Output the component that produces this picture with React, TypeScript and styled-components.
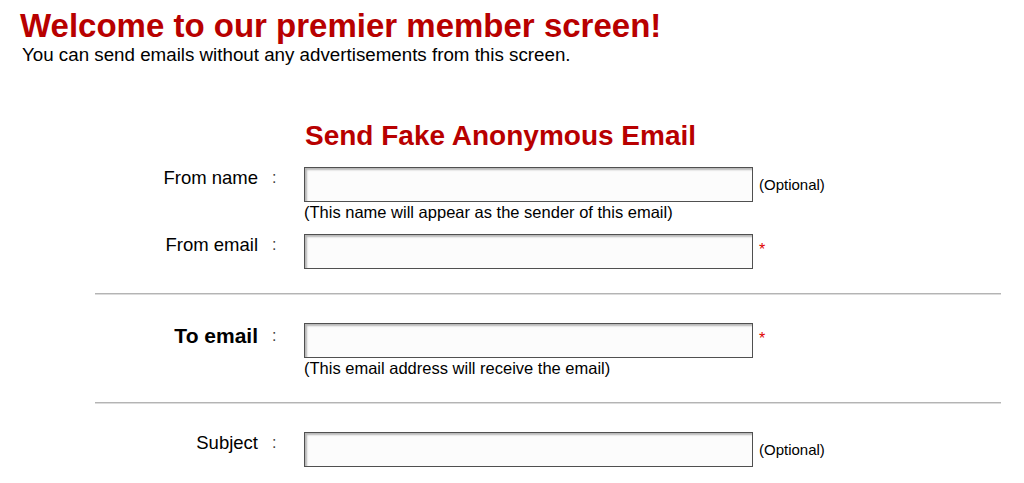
import React from 'react';
import styled, { createGlobalStyle } from 'styled-components';

const GlobalStyle = createGlobalStyle`
  body {
    margin: 0;
    background: #ffffff;
    font-family: "Liberation Sans", Arial, sans-serif;
    color: #000;
  }
`;

function FormRow({ label, strong, note, help, required }) {
  return (
    <Row>
      <Label strong={strong}>{label}</Label>
      <Colon strong={strong}>:</Colon>
      <FieldCell>
        <FieldLine>
          <TextBox type="text" />
          {note && <Note>{note}</Note>}
          {required && <Required>*</Required>}
        </FieldLine>
        {help && <Help>{help}</Help>}
      </FieldCell>
    </Row>
  );
}

export default function App() {
  return (
    <Page>
      <GlobalStyle />
      <Header>
        <Title>Welcome to our premier member screen!</Title>
        <Intro>You can send emails without any advertisements from this screen.</Intro>
      </Header>

      <FormBox>
        <FormTitleRow>
          <FormTitle>Send Fake Anonymous Email</FormTitle>
        </FormTitleRow>

        <FormRow label="From name" note="(Optional)" help="(This name will appear as the sender of this email)" />
        <Gap size={12} />
        <FormRow label="From email" required />

        <Divider top={24} bottom={28} />

        <FormRow label="To email" strong required help="(This email address will receive the email)" />

        <Divider top={24} bottom={28} />

        <FormRow label="Subject" note="(Optional)" />
      </FormBox>
    </Page>
  );
}

const Page = styled.div`
  padding: 8px 0 0 0;
`;

const Header = styled.div`
  padding-left: 20px;
`;

const Title = styled.h1`
  margin: 0;
  font-size: 33px;
  line-height: 36px;
  font-weight: bold;
  color: #b80000;
`;

const Intro = styled.p`
  margin: 0 0 0 2px;
  font-size: 18.75px;
  line-height: 22px;
`;

const FormBox = styled.div`
  margin: 54px 0 0 95px;
  width: 906px;
`;

const FormTitleRow = styled.div`
  padding-left: 210px;
  margin-bottom: 15px;
`;

const FormTitle = styled.h2`
  margin: 0;
  font-size: 28px;
  line-height: 32px;
  font-weight: bold;
  color: #b80000;
`;

const Row = styled.div`
  display: grid;
  grid-template-columns: 163px 46px 1fr;
  align-items: start;
`;

const Label = styled.div`
  text-align: right;
  font-size: ${(props) => (props.strong ? '21px' : '18.5px')};
  font-weight: ${(props) => (props.strong ? 'bold' : 'normal')};
  line-height: ${(props) => (props.strong ? '26px' : '21px')};
`;

const Colon = styled.div`
  font-size: 16px;
  line-height: ${(props) => (props.strong ? '26px' : '21px')};
  color: #444;
  padding-left: 14px;
`;

const FieldCell = styled.div`
  display: flex;
  flex-direction: column;
`;

const FieldLine = styled.div`
  display: flex;
  align-items: center;
`;

const TextBox = styled.input`
  box-sizing: border-box;
  width: 449px;
  height: 35px;
  margin: 0;
  border: 1px solid #505050;
  background: #fcfcfc;
  box-shadow: inset 2px 2px 2px rgba(0, 0, 0, 0.28);
  outline: none;
`;

const Note = styled.span`
  margin-left: 6px;
  font-size: 15px;
`;

const Required = styled.span`
  margin-left: 6px;
  margin-bottom: 4px;
  font-size: 16px;
  color: #e00000;
`;

const Help = styled.div`
  font-size: 16.5px;
  line-height: 19px;
  margin-top: 1px;
`;

const Gap = styled.div`
  height: ${(props) => props.size}px;
`;

const Divider = styled.hr`
  margin: ${(props) => props.top}px 0 ${(props) => props.bottom}px 0;
  border: 0;
  border-top: 1px solid #b4b4b4;
  border-bottom: 1px solid #dcdcdc;
  height: 0;
`;
